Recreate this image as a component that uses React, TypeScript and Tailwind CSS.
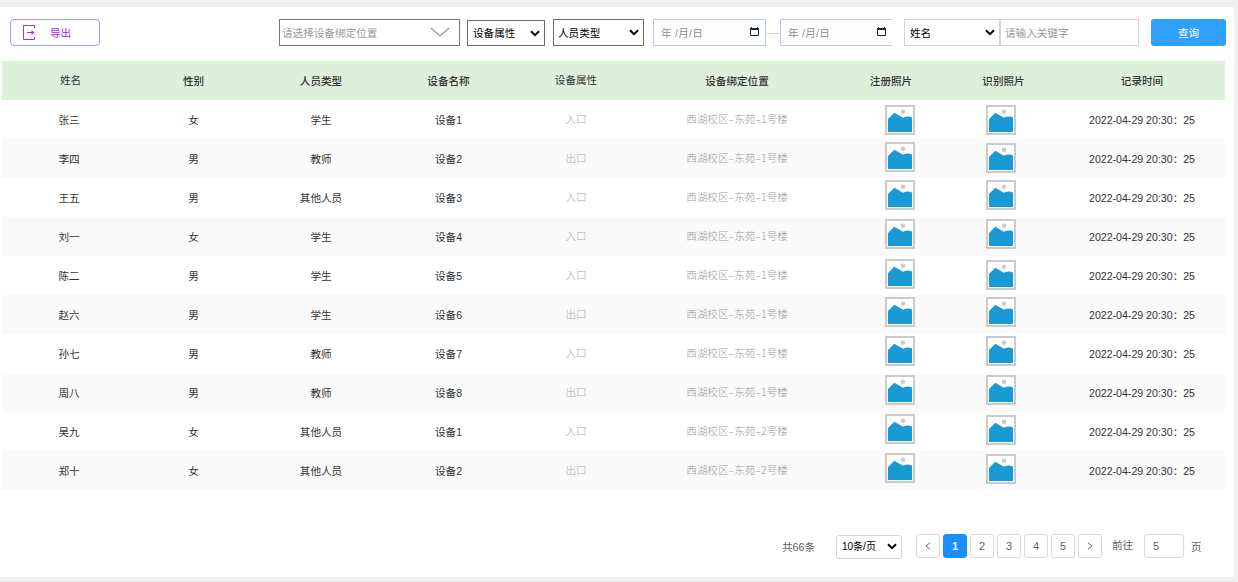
import type { ReactNode } from 'react'

const COLUMNS =
  'grid grid-cols-[128px_127px_128px_127px_128px_194px_114px_111px_166px] h-[39px] items-center text-center'

const HEADERS = [
  { label: '姓名', style: 'pl-[9px] pb-px font-normal' },
  { label: '性别', style: 'font-medium' },
  { label: '人员类型', style: 'font-medium' },
  { label: '设备名称', style: 'font-medium' },
  { label: '设备属性', style: 'pb-px font-normal' },
  { label: '设备绑定位置', style: 'font-medium' },
  { label: '注册照片', style: 'font-medium' },
  { label: '识别照片', style: 'font-medium' },
  { label: '记录时间', style: 'font-medium' },
]

const ROWS = [
  { name: '张三', gender: '女', type: '学生', device: '设备1', attr: '入口', place: '西湖校区–东苑–1号楼', photo: 'mt-[5px]', match: 'mt-[5px]' },
  { name: '李四', gender: '男', type: '教师', device: '设备2', attr: '出口', place: '西湖校区–东苑–1号楼', photo: 'mt-[3px]', match: 'mt-[4px]' },
  { name: '王五', gender: '男', type: '其他人员', device: '设备3', attr: '入口', place: '西湖校区–东苑–1号楼', photo: 'mt-[2px]', match: 'mt-[2px]' },
  { name: '刘一', gender: '女', type: '学生', device: '设备4', attr: '入口', place: '西湖校区–东苑–1号楼', photo: 'mt-[2px]', match: 'mt-[2px]' },
  { name: '陈二', gender: '男', type: '学生', device: '设备5', attr: '入口', place: '西湖校区–东苑–1号楼', photo: 'mt-[3px]', match: 'mt-[4px]' },
  { name: '赵六', gender: '男', type: '学生', device: '设备6', attr: '出口', place: '西湖校区–东苑–1号楼', photo: 'mt-[2px]', match: 'mt-[2px]' },
  { name: '孙七', gender: '男', type: '教师', device: '设备7', attr: '入口', place: '西湖校区–东苑–1号楼', photo: 'mt-[2px]', match: 'mt-[2px]' },
  { name: '周八', gender: '男', type: '教师', device: '设备8', attr: '出口', place: '西湖校区–东苑–1号楼', photo: 'mt-[2px]', match: 'mt-[2px]' },
  { name: '吴九', gender: '女', type: '其他人员', device: '设备1', attr: '入口', place: '西湖校区–东苑–2号楼', photo: 'mt-[2px]', match: 'mt-[3px]' },
  { name: '郑十', gender: '女', type: '其他人员', device: '设备2', attr: '出口', place: '西湖校区–东苑–2号楼', photo: 'mt-[2px]', match: 'mt-[3px]' },
]

function Arrow() {
  return (
    <svg width="10" height="7" viewBox="0 0 10 7" fill="none" className="shrink-0">
      <path d="M1 1.2 5 5.2 9 1.2" stroke="#000" strokeWidth="2" />
    </svg>
  )
}

function Select({ className, children }: { className: string; children: ReactNode }) {
  return (
    <button className={`flex items-center justify-between border bg-white text-black ${className}`}>
      <span>{children}</span>
      <Arrow />
    </button>
  )
}

function DateInput({ className }: { className: string }) {
  return (
    <div className={`flex h-[27px] items-center justify-between border-y border-l border-[#b8cbe3] pl-[7px] text-[#8c8c8c] ${className}`}>
      <span className="tracking-[0.25px]">年 /月/日</span>
      <svg width="9" height="9" viewBox="0 0 9 9" fill="none" className="mb-[2px]">
        <path d="M.5 1.5h8v7h-8z" stroke="#222" />
        <path d="M0 1h9v2H0zM1 0h1v1H1zM7 0h1v1H7z" fill="#222" />
      </svg>
    </div>
  )
}

function Photo({ className }: { className: string }) {
  return (
    <svg width="30" height="30" viewBox="0 0 30 30" className={`self-start ${className}`}>
      <path d="M0 0h30v30H0z" fill="#cbcbcb" />
      <path d="M2 2h26v26H2z" fill="#fff" />
      <circle cx="18" cy="6.8" r="2.3" fill="#cbcbcb" />
      <path d="M3 14 9.3 7.8 18 12.8Q22.5 10.2 27 12.5V27H3z" fill="#189ad5" />
    </svg>
  )
}

function Toolbar() {
  return (
    <div className="flex items-start pt-3 pl-[10px]">
      <button className="flex h-[27px] w-[90px] items-center rounded-[4px] border border-[#a19aff] pl-3 text-[#9a30ff]">
        <svg width="12" height="15" viewBox="0 0 12 15" fill="none" stroke="#9a30ff">
          <path d="M11.5 3V.5H.5v14h11V12" />
          <path d="M4 7.5h7" />
          <path d="M8.5 5 11.5 7.5 8.5 10z" fill="#9a30ff" stroke="none" />
        </svg>
        <span className="ml-[15px]">导出</span>
      </button>

      <div className="ml-[179px] flex h-[27px] w-[181px] items-center justify-between border border-[#767676] pr-[9px] pl-[2px] text-[#999]">
        <span>请选择设备绑定位置</span>
        <svg width="20" height="10" viewBox="0 0 20 10" fill="none" stroke="#999" className="mb-px">
          <path d="M1 1l9 8 9-8" strokeWidth="1.3" />
        </svg>
      </div>
      <Select className="mt-px ml-[7px] h-[26px] w-[78px] border-[#6b6b6b] pr-1 pl-[5px]">设备属性</Select>
      <Select className="ml-2 h-[27px] w-[91px] border-[#6b6b6b] pr-1 pl-[4px]">人员类型</Select>
      <DateInput className="ml-[9px] w-[113px] border-r pr-[6px]" />
      <div className="mx-px mt-[14px] h-px w-[12px] bg-[#ccc]" />
      <DateInput className="w-[112px] pr-[6px]" />
      <Select className="ml-[12px] h-[27px] w-[96px] border-[#d4d4d4] pr-1 pl-[5px]">姓名</Select>
      <div className="flex h-[27px] w-[139px] items-center border border-[#d4d4d4] pl-1 text-[#999]">请输入关键字</div>
      <button className="ml-3 h-[27px] w-[75px] rounded-[3px] bg-[#2fa0fb] text-white">查询</button>
    </div>
  )
}

function Table() {
  return (
    <div className="mt-[15px] ml-[2px] w-[1223px] text-[#333]">
      <div className={`${COLUMNS} bg-[#ddf0d9]`}>
        {HEADERS.map((h) => (
          <div key={h.label} className={h.style}>
            {h.label}
          </div>
        ))}
      </div>
      {ROWS.map((row) => (
        <div key={row.name} className={`${COLUMNS} even:bg-white odd:bg-[#fafafa]`}>
          <div className="pl-[6px]">{row.name}</div>
          <div>{row.gender}</div>
          <div>{row.type}</div>
          <div>{row.device}</div>
          <div className="pb-px font-light text-[#aaa]">{row.attr}</div>
          <div className="pb-px font-['Noto_Sans_CJK_SC',sans-serif] font-light text-[#999]">{row.place}</div>
          <div className="flex h-full pl-[51px]">
            <Photo className={row.photo} />
          </div>
          <div className="flex h-full pl-[38px]">
            <Photo className={row.match} />
          </div>
          <div>2022-04-29 20:30：25</div>
        </div>
      ))}
    </div>
  )
}

function PageButton({ active, children }: { active?: boolean; children: ReactNode }) {
  return (
    <button
      className={`flex h-6 w-6 items-center justify-center rounded-[3px] border ${
        active ? 'border-[#188fff] bg-[#188fff] font-bold text-white' : 'border-[#d9d9d9]'
      }`}
    >
      {children}
    </button>
  )
}

function Pagination() {
  return (
    <div className="mt-[44px] flex items-start pl-[782px] text-[#606060]">
      <span className="mt-[5px] w-[54px]">共66条</span>
      <Select className="mt-px h-6 w-[66px] rounded-[3px] border-[#d4d4d4] pr-1 pl-[5px] pb-px text-[10px]">10条/页</Select>
      <div className="ml-[14px] flex gap-[3px] text-[11px]">
        <PageButton>
          <svg width="6" height="8" viewBox="0 0 6 8" fill="none" stroke="#666">
            <path d="M5 .8 1 4l4 3.2" />
          </svg>
        </PageButton>
        <PageButton active>1</PageButton>
        <PageButton>2</PageButton>
        <PageButton>3</PageButton>
        <PageButton>4</PageButton>
        <PageButton>5</PageButton>
        <PageButton>
          <svg width="6" height="8" viewBox="0 0 6 8" fill="none" stroke="#666">
            <path d="M1 .8 5 4 1 7.2" />
          </svg>
        </PageButton>
      </div>
      <span className="mt-[3px] ml-[10px] w-[32px]">前往</span>
      <div className="flex h-6 w-10 items-center rounded-[3px] border border-[#d9d9d9] pl-2 text-[11px]">5</div>
      <span className="mt-[5px] ml-[7px]">页</span>
    </div>
  )
}

export default function App() {
  return (
    <div className="h-[582px] w-[1238px] overflow-hidden bg-[#f0f0f0] pt-[7px] font-['Liberation_Sans','Noto_Sans_CJK_SC',sans-serif] text-[10.6px] leading-4 whitespace-nowrap">
      <div className="h-[570px] w-[1234px] bg-white">
        <Toolbar />
        <Table />
        <Pagination />
      </div>
    </div>
  )
}
